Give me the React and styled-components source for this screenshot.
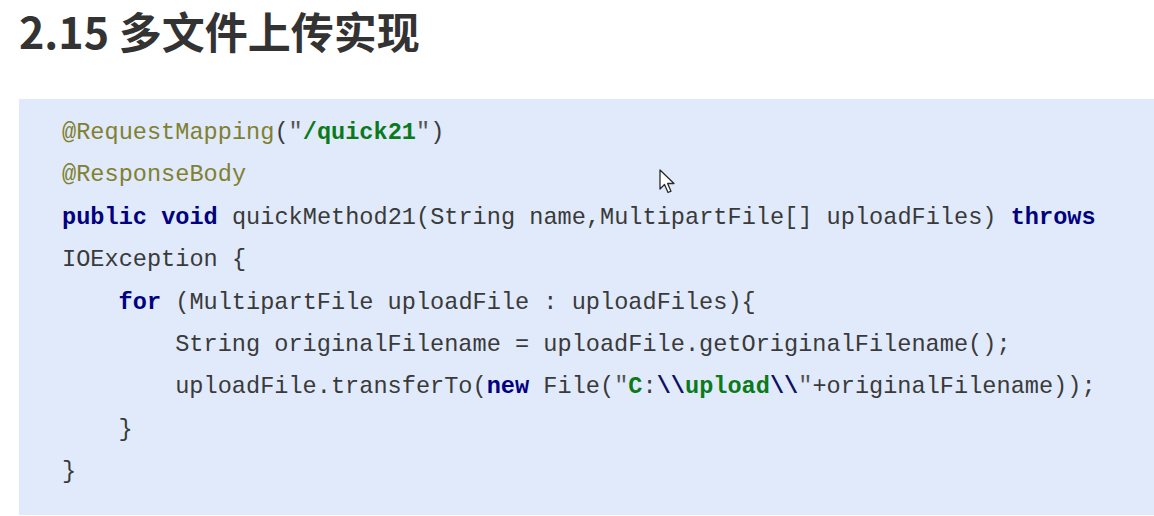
import styled, { createGlobalStyle } from "styled-components";

const GlobalStyle = createGlobalStyle`
	html, body {
		margin: 0;
		padding: 0;
		background: #ffffff;
	}
`;

const Page = styled.div`
	width: 1154px;
	height: 516px;
	overflow: hidden;
	display: flex;
	flex-direction: column;
`;

const Title = styled.h1`
	margin: 0;
	padding: 0 0 0 19px;
	height: 99px;
	box-sizing: border-box;
	font-family: "Noto Sans CJK SC", "Noto Sans", sans-serif;
	font-weight: 700;
	font-size: 43px;
	line-height: 60px;
	color: #333333;
	white-space: nowrap;
`;

const CodeBox = styled.pre`
	position: relative;
	flex: 1;
	margin: 0 0 1px 19px;
	padding: 13px 0 0 43px;
	background: #e0eafb;
	font-family: "Liberation Mono", "Courier New", monospace;
	font-size: 23.6px;
	line-height: 42.4px;
	color: #3a3a3a;
`;

const Line = styled.div`
	padding-left: ${({ indent }) => indent * 56.6}px;
	white-space: pre;
	height: 42.4px;
`;

const Anno = styled.span`
	color: #808030;
`;

const Kw = styled.span`
	color: #000080;
	font-weight: 700;
`;

const Str = styled.span`
	color: #0a7a1a;
	font-weight: 700;
`;

const Esc = styled.span`
	color: #101060;
	font-weight: 700;
`;

const Quote = styled.span`
	color: #555555;
`;

const Cursor = styled.svg`
	position: absolute;
	left: 640px;
	top: 70px;
`;

const App = () => {
	return (
		<>
			<GlobalStyle />
			<Page>
				<Title>2.15 多文件上传实现</Title>
				<CodeBox>
					<Line indent={0}>
						<Anno>@RequestMapping</Anno>(<Quote>"</Quote>
						<Str>/quick21</Str>
						<Quote>"</Quote>)
					</Line>
					<Line indent={0}>
						<Anno>@ResponseBody</Anno>
					</Line>
					<Line indent={0}>
						<Kw>public</Kw> <Kw>void</Kw> quickMethod21(String
						name,MultipartFile[] uploadFiles) <Kw>throws</Kw>
					</Line>
					<Line indent={0}>IOException {"{"}</Line>
					<Line indent={1}>
						<Kw>for</Kw> (MultipartFile uploadFile : uploadFiles){"{"}
					</Line>
					<Line indent={2}>
						String originalFilename = uploadFile.getOriginalFilename();
					</Line>
					<Line indent={2}>
						uploadFile.transferTo(<Kw>new</Kw> File(<Quote>"</Quote>
						<Str>C</Str>:<Esc>\\</Esc>
						<Str>upload</Str>
						<Esc>\\</Esc>
						<Quote>"</Quote>+originalFilename));
					</Line>
					<Line indent={1}>{"}"}</Line>
					<Line indent={0}>{"}"}</Line>
					<Cursor width="20" height="28" viewBox="0 0 20 28">
						<path
							d="M1 1 L1 20 L5.5 15.5 L9 23.5 L12 22.2 L8.6 14.5 L15 14.5 Z"
							fill="#ffffff"
							stroke="#2a2a2a"
							strokeWidth="1.3"
							strokeLinejoin="round"
						/>
					</Cursor>
				</CodeBox>
			</Page>
		</>
	);
};

export default App;
